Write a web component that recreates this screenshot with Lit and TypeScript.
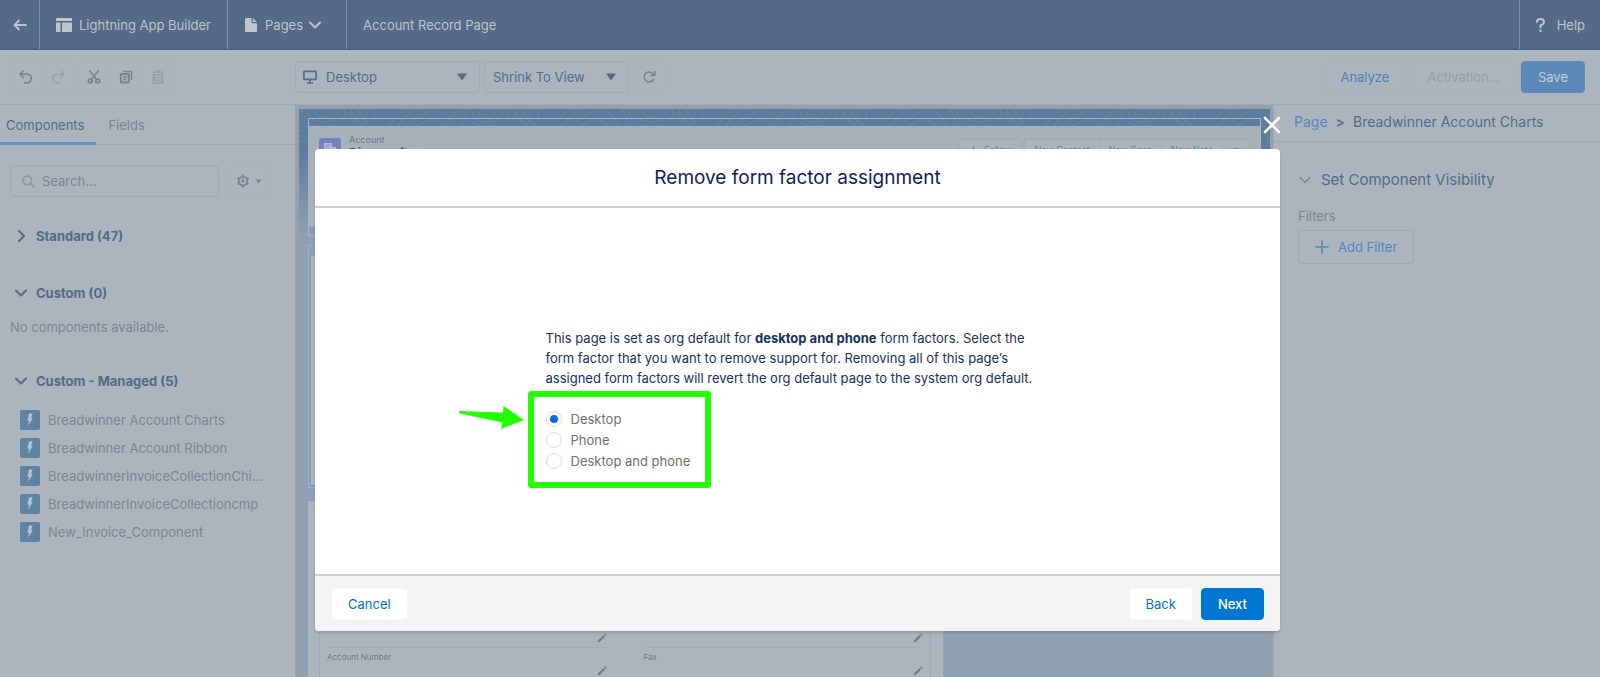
import { LitElement, html, css, svg } from "lit";
import { customElement, state } from "lit/decorators.js";

const chevronDown = html`<svg class="chev" viewBox="0 0 14 14" aria-hidden="true"><path d="M2 4.5l5 5 5-5" /></svg>`;
const chevronRight = html`<svg class="chev" viewBox="0 0 14 14" aria-hidden="true"><path d="M5 2l5 5-5 5" /></svg>`;
const caret = html`<svg class="caret" viewBox="0 0 12 8" aria-hidden="true"><path d="M1 0.5h10L6 7.5z" /></svg>`;
const pencil = html`<svg class="pencil" viewBox="0 0 10 10" aria-hidden="true"><path d="M0.5 9.5l0.6-2.3 5.3-5.3 1.7 1.7-5.3 5.3zM7 1.3l0.7-0.7q0.4-0.3 0.8 0l0.9 0.9q0.3 0.4 0 0.8l-0.7 0.7z" /></svg>`;

@customElement("app-root")
export class AppRoot extends LitElement {
  @state() private factor = "Desktop";

  private components = [
    "Breadwinner Account Charts",
    "Breadwinner Account Ribbon",
    "BreadwinnerInvoiceCollectionChi...",
    "BreadwinnerInvoiceCollectioncmp",
    "New_Invoice_Component",
  ];

  static styles = css`
    :host {
      display: grid;
      grid-template-rows: 50px 55px 1fr;
      position: relative;
      height: 100vh;
      overflow: hidden;
      background: #acb4be;
      color: #546a87;
      font: 13px/20px Inter, "Liberation Sans", sans-serif;
    }
    * { box-sizing: border-box; }
    h1, h2, h3, p, ul, dl, dd, dt, fieldset { margin: 0; padding: 0; border: 0; font: inherit; list-style: none; }
    button, input, select { font: inherit; color: inherit; margin: 0; }
    button { background: none; border: 1px solid #a6aebb; border-radius: 4px; padding: 0 16px; height: 32px; }
    a { color: #5585bb; text-decoration: none; }
    svg { display: block; flex: none; }
    .chev { width: 14px; height: 14px; fill: none; stroke: currentColor; stroke-width: 2; stroke-linecap: round; stroke-linejoin: round; }
    .caret { width: 12px; height: 8px; fill: currentColor; }

    .top { display: flex; background: #546a87; border-bottom: 1px solid #48617f; box-shadow: inset 0 -1px #4d6583; color: #bdc5ce; }
    .top > * { display: flex; align-items: center; border-right: 1px solid #8190a5; padding: 0 16px; }
    .top .back { width: 40px; padding: 0; justify-content: center; border-width: 0 1px 0 0; border-radius: 0; height: auto; }
    .top .title { flex: 1; }
    .top .help { border: 0; padding-right: 15px; gap: 12px; color: inherit; }
    .top .app { gap: 7px; }
    .top .pages { gap: 8px; border-width: 0 1px 0 0; border-radius: 0; height: auto; padding: 0 24px 0 17px; }
    .pages span { display: flex; align-items: center; gap: 5px; }

    .tools { display: flex; align-items: center; border-bottom: 1px solid #a1a9b5; padding: 0 15px 0 10px; }
    .group { display: flex; margin-right: 4px; }
    .group button { width: 32px; padding: 0; display: grid; place-items: center; border-color: #a8b0bb; border-left-width: 0; border-radius: 0; color: #7a8490; }
    .group button:first-child { border-left-width: 1px; border-radius: 4px 0 0 4px; }
    .group button:last-child { border-radius: 0 4px 4px 0; }
    .group button:disabled { color: #99a1ac; }
    .group svg { width: 16px; height: 16px; }
    .selects { display: flex; gap: 4px; margin-left: 117px; flex: 1; }
    .pick { display: grid; align-items: center; }
    .pick > * { grid-area: 1 / 1; }
    .pick svg { pointer-events: none; }
    .pick .caret { justify-self: end; margin-right: 12px; }
    .pick .screen { margin-left: 8px; }
    .pick select { appearance: none; width: 145px; height: 32px; background: none; border: 1px solid #a0a9b5; border-radius: 4px; padding: 0 24px 0 8px; }
    .pick .device { width: 185px; padding-left: 30px; }
    .refresh { width: 32px; padding: 0; display: grid; place-items: center; border-color: #a8b0bb; color: #7a8490; }
    .actions { display: flex; gap: 4px; }
    .actions button { border-color: #a8b0bb; color: #4d80ba; }
    .actions button:disabled { color: #959eaa; }
    .actions .save { background: #5b89b9; border-color: #5b89b9; color: #c4cdd8; }

    .work { display: grid; grid-template-columns: 296px 1fr 327px; min-height: 0; }
    .left { border-right: 1px solid #98a2ae; overflow: hidden; }
    .tabs { display: flex; height: 40px; border-bottom: 1px solid #a1a9b5; margin-bottom: 20px; }
    .tabs button { border: 0; border-radius: 0; height: 40px; padding: 0 12px; color: #7c8591; }
    .tabs .on { color: #546a87; border-bottom: 3px solid #5b93cf; padding: 3px 12px 0 6px; }
    .find { display: flex; gap: 8px; padding-left: 10px; margin-bottom: 30px; }
    .search { display: grid; align-items: center; width: 209px; }
    .search > * { grid-area: 1 / 1; }
    .search svg { margin-left: 12px; color: #8b949f; }
    .search input { width: 100%; height: 32px; background: none; border: 1px solid #a0a9b5; border-radius: 4px; padding: 0 8px 0 31px; }
    .search input::placeholder { color: #7c8591; opacity: 1; }
    .gear { display: flex; align-items: center; gap: 5px; padding: 0 8px; border-color: #a8b0bb; color: #7a8490; }
    .gear .caret { width: 7px; height: 5px; }
    .sect { display: flex; align-items: center; gap: 8px; margin-left: 14px; line-height: 18px; font-weight: 700; }
    .grey { color: #7c8591; }
    .std { margin-bottom: 39px; }
    .none { margin: 15px 0 35px 10px; }
    .list { margin: 16px 0 0 20px; }
    .list li { display: flex; align-items: center; gap: 8px; height: 28px; color: #7c8591; }

    .canvas { background: #95a0ac; padding: 4px 3px 0; overflow: hidden; }
    .theme { display: grid; grid-template-rows: 118px 9px 243px 13px 1fr; height: 100%; background: linear-gradient(#5b7c9d 0, #5b7c9d 40px, #8fa0b5 130px); position: relative; padding: 9px 9px 0; }
    .topo { position: absolute; inset: 0 0 auto; width: 100%; height: 120px; fill: none; stroke: #7895b0; stroke-width: 1; opacity: .4; }
    .theme > :not(.topo) { position: relative; }
    .region { border: 1px solid #a6b4c4; padding: 7px 0 8px; }
    .record { background: #a8b0ba; height: 100%; padding: 12px 10px; display: flex; justify-content: space-between; font-size: 9px; line-height: 10px; }
    .who { display: flex; gap: 8px; color: #6b7582; }
    .who strong { display: block; font-size: 12px; line-height: 15px; color: #4b5561; }
    .badge { width: 22px; height: 22px; background: #7280bb; border-radius: 3px; }
    .who p { margin-top: -3px; }
    .tree { width: 13px; height: 13px; border: 1px solid #a0a9b4; background: #abb3bd; border-radius: 2px; margin: 7px 0 0 -2px; }
    .cmds { display: flex; color: #5585bb; margin-top: 1px; }
    .cmds button { display: flex; align-items: center; gap: 6px; height: 22px; border-color: #a0a9b4; background: #abb3bd; border-radius: 0; padding: 0 9px; margin-left: -1px; font-size: 9px; line-height: 20px; }
    .cmds .first { margin-right: 4px; border-radius: 3px; }
    .cmds .caret { width: 8px; height: 5px; }
    .main { border: 1px solid #9fafc1; padding: 8px 0 0; }
    .main div { border: 2px solid #7fa0bf; background: #acb4be; height: 100%; }
    .gap { background: #8fa0b9; }
    .lower { display: grid; grid-template-columns: 636px 1fr; background: #8fa0b3; margin: 0 -9px 0 0; }
    .detail { background: #acb4be; border-right: 1px dotted #7f95ad; padding: 0 12px 0 11px; }
    .detail dl { display: grid; grid-template-columns: 1fr 1fr; column-gap: 37px; height: 100%; border: dotted #8fa1b4; border-width: 0 1px; padding: 114px 7px 0; align-content: start; font-size: 8px; line-height: 10px; color: #6f7985; }
    .detail dl div { display: grid; grid-template-rows: 10px 18px; height: 33px; padding-top: 4px; border-bottom: 1px solid #a4acb6; }
    .pencil { width: 10px; height: 10px; fill: #727c88; justify-self: end; align-self: end; }
    .detail dd { display: grid; padding-bottom: 4px; }

    .right { border-left: 1px solid #a1a9b5; }
    .crumb { display: flex; gap: 8px; height: 37px; padding: 0 20px; line-height: 33px; border-bottom: 1px solid #a1a9b5; font-size: 14px; }
    .crumb b { font-weight: 600; }
    .vis { padding: 26px 24px; }
    .vis h2 { display: flex; align-items: center; gap: 9px; font-size: 15px; line-height: 24px; margin-bottom: 14px; }
    .vis h2 .chev { color: #7c8591; stroke-width: 1.5; }
    .vis .add { display: flex; align-items: center; gap: 9px; border-color: #a0a9b5; color: #5585bb; height: 34px; margin-top: 4px; }

    .overlay { position: absolute; inset: 0; display: grid; padding: 149px 320px 46px 315px; }
    .modal { position: relative; display: grid; grid-template-rows: 59px 1fr 57px; border-radius: 4px; background: #fff; color: #0a1f5c; box-shadow: 0 2px 3px rgba(0, 0, 0, .16); }
    .modal h1 { text-align: center; font-size: 19px; line-height: 58px; border-bottom: 2px solid #cfcfcf; }
    .body { display: grid; place-content: center; grid-template-columns: 504px; padding: 34px 0 0; }
    .body p { color: #16325c; }
    .choices { margin: 3px 0 0; padding: 11px 12px; border: 6px solid #21ff00; border-radius: 3px; }
    .foot { display: flex; align-items: center; gap: 8px; background: #f3f3f3; border-top: 2px solid #cfcfcf; border-radius: 0 0 4px 4px; padding: 0 16px; color: #0070d2; }
    .foot button { background: #fff; border-color: #f7f7f7; }
    .foot .cancel { margin-right: auto; }
    .foot .next { background: #0176d3; border-color: #0176d3; color: #fff; font-weight: 500; }
    .close { position: absolute; top: -34px; right: -2px; width: 20px; height: 20px; padding: 0; border: 0; display: grid; place-items: center; }
    .marked { position: relative; width: 183px; margin-left: -18px; }
    .arrow { position: absolute; left: -69px; top: 18px; fill: #21ff00; }
    .opt { display: flex; align-items: center; gap: 9px; height: 21px; color: #706e6b; white-space: nowrap; }
    .opt input { appearance: none; flex: none; width: 16px; height: 16px; border: 1px solid #dddbda; border-radius: 50%; background: #fff; display: grid; place-items: center; }
    .opt input:checked::before { content: ""; width: 8px; height: 8px; border-radius: 50%; background: #0070d2; }
  `;

  private topo() {
    const rings = [8, 15, 22, 29, 36, 44, 52];
    return html`<svg class="topo" aria-hidden="true">
      <defs>
        <pattern id="contours" width="164" height="120" patternUnits="userSpaceOnUse">
          ${rings.map((r) => svg`<ellipse cx="24" cy="4" rx=${r} ry=${r * 0.6} /><ellipse cx="118" cy="50" rx=${r * 0.8} ry=${r * 1.5} transform="rotate(32 118 50)" />`)}
          <path d="M50 0q14 14 20 40t40 80M58 0q14 14 20 40t40 80M160 0q-14 20-40 30t-50 50" />
        </pattern>
      </defs>
      <rect width="100%" height="100%" fill="url(#contours)" stroke="none" />
    </svg>`;
  }

  render() {
    return html`
      <header class="top">
        <button class="back" aria-label="Back">
          <svg width="14" height="12" viewBox="0 0 14 12" fill="none" stroke="currentColor" stroke-width="1.8" stroke-linecap="round" stroke-linejoin="round"><path d="M13 6H1.5M6 1.5L1.5 6 6 10.5" /></svg>
        </button>
        <div class="app">
          <svg width="16" height="14" viewBox="0 0 16 14" fill="currentColor"><path d="M1 0h14q1 0 1 1v2H0V1q0-1 1-1zM0 4.5h4.5V14H1q-1 0-1-1zM6 4.5h10V13q0 1-1 1H6z" /></svg>
          Lightning App Builder
        </div>
        <button class="pages">
          <svg width="12" height="14" viewBox="0 0 12 14" fill="currentColor"><path d="M1 0h5.5v4q0 1.2 1.2 1.2H12V13q0 1-1 1H1q-1 0-1-1V1q0-1 1-1zM7.8 0L12 4H8.3q-.5 0-.5-.5z" /></svg>
          <span>Pages ${chevronDown}</span>
        </button>
        <div class="title">Account Record Page</div>
        <a class="help" href="#">
          <svg width="9" height="14" viewBox="0 0 9 14" fill="none" stroke="currentColor" stroke-width="2" stroke-linecap="round"><path d="M1 4Q1 1 4.5 1T8 4Q8 6 4.5 7.500V9.200" /><path d="M4.500 12.600v.1" stroke-width="2.400" /></svg>
          Help
        </a>
      </header>

      <div class="tools">
        <div class="group">
          <button aria-label="Undo"><svg viewBox="0 0 16 16" fill="none" stroke="currentColor" stroke-width="1.7" stroke-linecap="round" stroke-linejoin="round"><path d="M5 2L2 5.200 5 8.400M2.500 5.200h6.500a4.300 4.300 0 0 1 0 8.600H6.500" /></svg></button>
          <button aria-label="Redo" disabled><svg viewBox="0 0 16 16" fill="none" stroke="currentColor" stroke-width="1.5" stroke-linecap="round" stroke-linejoin="round"><path d="M11 2l3 3.200-3 3.200M13.500 5.200H7a4.300 4.300 0 0 0 0 8.600h2.500" /></svg></button>
        </div>
        <div class="group">
          <button aria-label="Cut"><svg viewBox="0 0 16 16" fill="none" stroke="currentColor" stroke-width="1.700" stroke-linecap="round"><path d="M4 2l6.500 8.500M12 2L5.500 10.500" /><circle cx="4.300" cy="12" r="1.900" /><circle cx="11.700" cy="12" r="1.900" /></svg></button>
          <button aria-label="Copy"><svg viewBox="0 0 16 16" fill="none" stroke="currentColor" stroke-width="1.600"><path d="M5 2.500h8.500V11" /><rect x="2.800" y="5" width="8" height="8.500" rx=".5" stroke-width="2" /><path d="M5 8h4M5 10.500h3" /></svg></button>
          <button aria-label="Paste" disabled><svg viewBox="0 0 16 16" fill="currentColor"><path d="M5.500 1h5v3h-5z" /><path fill-rule="evenodd" d="M2.500 2.500h2V5h7V2.500h2V15h-11zM5 7v1h6V7zm0 2.500v1h6v-1zM5 12v1h6v-1z" /></svg></button>
        </div>
        <div class="selects">
          <div class="pick">
            <select class="device" aria-label="Form factor"><option>Desktop</option></select>
            <svg class="screen" width="14" height="14" viewBox="0 0 14 14" fill="none" stroke="currentColor" stroke-width="1.700"><rect x=".9" y="1.400" width="12.200" height="8" rx=".6" /><path d="M7 9.500v3M4 13h6" /></svg>
            ${caret}
          </div>
          <div class="pick">
            <select aria-label="Zoom"><option>Shrink To View</option></select>
            ${caret}
          </div>
          <button class="refresh" aria-label="Refresh"><svg width="14" height="14" viewBox="0 0 14 14" fill="none" stroke="currentColor" stroke-width="1.600" stroke-linecap="round"><path d="M11.500 9.500a5 5 0 1 1 0-5L12 5.200M12.800 1.500v4H9" /></svg></button>
        </div>
        <div class="actions">
          <button>Analyze</button>
          <button disabled>Activation...</button>
          <button class="save">Save</button>
        </div>
      </div>

      <div class="work">
        <aside class="left">
          <nav class="tabs"><button class="on">Components</button><button>Fields</button></nav>
          <div class="find">
            <div class="search">
              <input type="text" aria-label="Search components" placeholder="Search..." />
              <svg width="13" height="13" viewBox="0 0 13 13" fill="none" stroke="currentColor" stroke-width="1.500" stroke-linecap="round"><circle cx="5.300" cy="5.300" r="4.400" /><path d="M8.600 8.600l3.600 3.600" /></svg>
            </div>
            <button class="gear" aria-label="Options">
              <svg width="14" height="14" viewBox="0 0 14 14" fill="none" stroke="currentColor"><circle cx="7" cy="7" r="4.300" stroke-width="1.700" /><circle cx="7" cy="7" r="1.700" fill="currentColor" stroke="none" /><path stroke-width="2" d="M7 .6v2M7 11.400v2M1.500 3.800l1.700 1M10.800 9.200l1.700 1M1.500 10.200l1.700-1M10.800 4.800l1.700-1" /></svg>
              ${caret}
            </button>
          </div>
          <h2 class="sect std">${chevronRight}Standard (47)</h2>
          <h2 class="sect">${chevronDown}Custom (0)</h2>
          <p class="none grey">No components available.</p>
          <h2 class="sect">${chevronDown}Custom - Managed (5)</h2>
          <ul class="list">
            ${this.components.map((name) => html`<li>
              <svg width="20" height="20" viewBox="0 0 20 20"><rect width="20" height="20" rx="2" fill="#5f84a2" /><path d="M9 3.500h3.500L11.200 8h1.600L7.800 16.500l1.400-5.700H7.300z" fill="#b7c4d0" /></svg>
              ${name}
            </li>`)}
          </ul>
        </aside>

        <main class="canvas">
          <div class="theme">
            ${this.topo()}
            <section class="region">
              <div class="record">
                <div class="who">
                  <svg class="badge" viewBox="0 0 22 22" fill="#b4bcd8"><path fill-rule="evenodd" d="M5 5h8v4h4v9H5zM6.500 6.500v1.200h1.200V6.500zm2 0v1.200h1.200V6.500zm2 0v1.200h1.200V6.500zm-4 2v1.200h1.200V8.500zm2 0v1.200h1.200V8.500zm5 2.500v1.200h1.200V11z" /></svg>
                  <p>Account<strong>Dinercraft</strong></p>
                  <span class="tree"></span>
                </div>
                <div class="cmds">
                  <button class="first"><svg width="9" height="9" viewBox="0 0 9 9" fill="none" stroke="currentColor" stroke-width="1.300"><path d="M4.500 0v9M0 4.500h9" /></svg>Follow</button>
                  <button>New Contact</button><button>New Case</button><button>New Note</button><button aria-label="More">${caret}</button>
                </div>
              </div>
            </section>
            <span></span>
            <section class="main"><div></div></section>
            <div class="gap"></div>
            <section class="lower">
              <div class="detail">
                <dl>
                  <div><dt></dt><dd>${pencil}</dd></div>
                  <div><dt></dt><dd>${pencil}</dd></div>
                  <div><dt>Account Number</dt><dd>${pencil}</dd></div>
                  <div><dt>Fax</dt><dd>${pencil}</dd></div>
                </dl>
              </div>
            </section>
          </div>
        </main>

        <aside class="right">
          <nav class="crumb"><a href="#">Page</a><b>&gt;</b><span>Breadwinner Account Charts</span></nav>
          <div class="vis">
            <h2>${chevronDown}Set Component Visibility</h2>
            <p class="grey">Filters</p>
            <button class="add"><svg width="14" height="14" viewBox="0 0 14 14" fill="none" stroke="currentColor" stroke-width="1.600" stroke-linecap="round"><path d="M7 1v12M1 7h12" /></svg>Add Filter</button>
          </div>
        </aside>
      </div>

      <div class="overlay">
        <section class="modal" role="dialog" aria-labelledby="heading">
          <button class="close" aria-label="Close"><svg width="18" height="18" viewBox="0 0 18 18" fill="none" stroke="#fff" stroke-width="2.600" stroke-linecap="round"><path d="M2 2l14 14M16 2L2 16" /></svg></button>
          <h1 id="heading">Remove form factor assignment</h1>
          <div class="body">
            <p>This page is set as org default for <b>desktop and phone</b> form factors. Select the form factor that you want to remove support for. Removing all of this page’s assigned form factors will revert the org default page to the system org default.</p>
            <div class="marked">
              <svg class="arrow" width="66" height="24" viewBox="0 0 66 24"><path d="M0 6q0-1 1-1l43 1.500.5-6.500L65 14 42 23l1.500-6.500L1 7.500q-1-.5-1-1.500z" /></svg>
              <fieldset class="choices" aria-label="Form factor to remove">
                ${["Desktop", "Phone", "Desktop and phone"].map((f) => html`<label class="opt">
                  <input type="radio" name="factor" .checked=${this.factor === f} @change=${() => (this.factor = f)} />${f}
                </label>`)}
              </fieldset>
            </div>
          </div>
          <footer class="foot">
            <button class="cancel">Cancel</button><button>Back</button><button class="next">Next</button>
          </footer>
        </section>
      </div>
    `;
  }
}
